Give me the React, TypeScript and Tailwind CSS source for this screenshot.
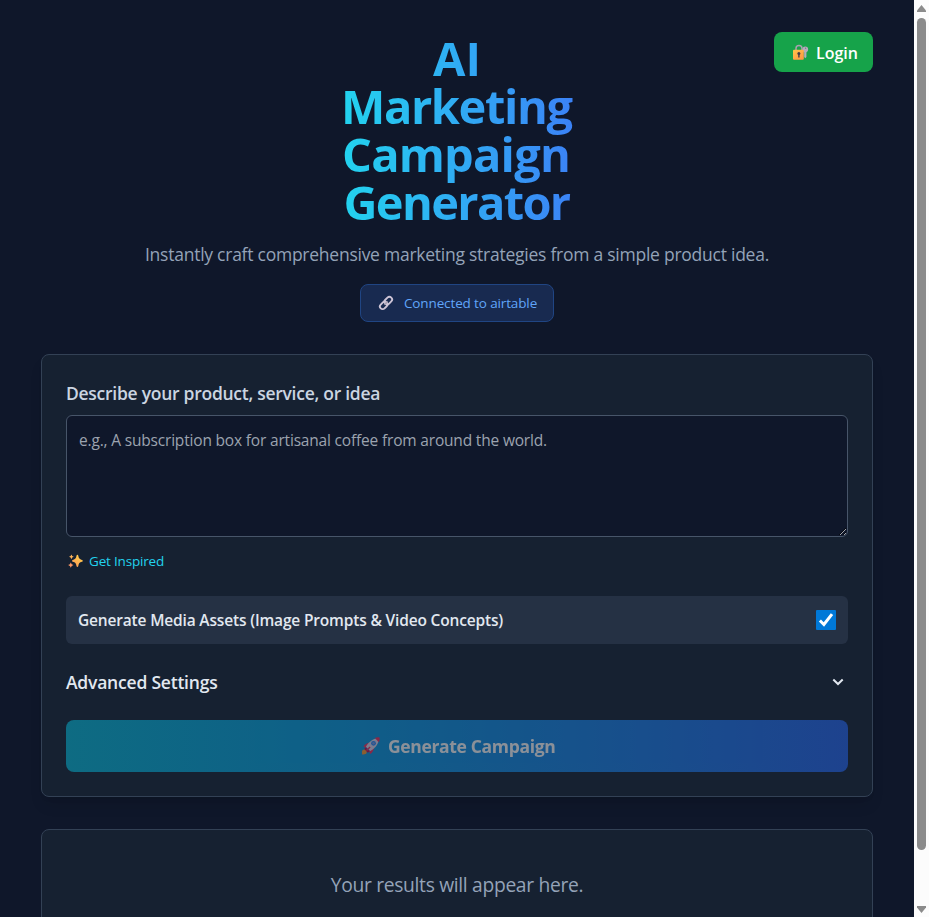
import React, { useState } from "react";

function LockIcon() {
  return (
    <svg width="17" height="17" viewBox="0 0 17 17" fill="none">
      <path d="M4 7V4.600a3 3 0 0 1 6 0V7" stroke="#a9a1b0" strokeWidth="1.500" />
      <circle cx="13.300" cy="5.400" r="2.800" fill="#b4acbc" />
      <circle cx="13.600" cy="4.200" r=".6" fill="#6f6878" />
      <path d="M12.200 7.500h2.200v5.400l-1.100 1.300-1.100-1.300z" fill="#b4acbc" />
      <rect x="1" y="5.800" width="10.800" height="10" rx="1" fill="url(#lockBody)" />
      <circle cx="6.900" cy="9.600" r="1.500" fill="#433b46" />
      <path d="M6.200 10.200h1.400v3.200H6.200z" fill="#433b46" />
      <defs>
        <linearGradient id="lockBody" x1="3" y1="6" x2="10" y2="16" gradientUnits="userSpaceOnUse">
          <stop stopColor="#ffc14a" />
          <stop offset="1" stopColor="#ff9442" />
        </linearGradient>
      </defs>
    </svg>
  );
}

function LinkIcon() {
  return (
    <svg width="16" height="16" viewBox="0 0 16 16" fill="none" stroke="#cdc4d6" strokeWidth="1.9">
      <rect x="6.1" y="2.9" width="8.4" height="5.4" rx="2.7" transform="rotate(-45 10.3 5.6)" />
      <rect x="1.5" y="7.7" width="8.4" height="5.4" rx="2.7" transform="rotate(-45 5.7 10.4)" />
      <path d="m6.5 9.6 3.1-3.1" stroke="#a79fb0" strokeWidth="1.3" />
    </svg>
  );
}

function SparklesIcon() {
  return (
    <svg width="15" height="14" viewBox="0 0 15 14">
      <defs>
        <linearGradient id="spark" x1="12" y1="1" x2="3" y2="13" gradientUnits="userSpaceOnUse">
          <stop stopColor="#ffd04a" />
          <stop offset="1" stopColor="#ff9257" />
        </linearGradient>
      </defs>
      <path fill="url(#spark)" d="M9.400.8c.5 0 .7.4.9 1 .5 2.700 1.200 3.500 3.600 4.100.6.1.9.5.9 1s-.3.800-.9.900c-2.400.6-3.100 1.400-3.600 4.100-.2.6-.4 1-.9 1s-.7-.4-.9-1C8 9.200 7.300 8.400 4.900 7.800 4.300 7.700 4 7.400 4 6.900s.3-.9.900-1C7.300 5.300 8 4.500 8.500 1.800c.2-.6.4-1 .9-1Z" />
      <path fill="#ffb45a" d="m3.400.4.8 1.600 1.600.8-1.600.8-.8 1.600-.8-1.600L1 2.800 2.600 2z" />
      <path fill="#ff9a68" d="m2.800 8.400.9 1.800 1.800.9-1.800.9-.9 1.800-.9-1.800-1.800-.9 1.800-.9z" />
    </svg>
  );
}

function RocketIcon() {
  return (
    <svg width="20" height="20" viewBox="0 0 20 20">
      <path fill="#f92f60" d="M2.500 10.800c1-2.500 3.400-3.800 6.500-4L5.900 11.900zM9.100 18c2.400-1.200 3.700-3.700 3.900-6.800L8 14.100z" />
      <path fill="#ff9b2f" d="M1.300 14.400c1.200-1.200 3.400-.9 4 0 .7.800.6 2.600-.4 3.400-1 .7-2.600.8-3.800.6 0-1.400-.3-3.200.2-4Z" />
      <path fill="#ca0b4a" d="m4.700 11.500 3.800 3.800-1.600 1.500-3.600-3.700z" />
      <path fill="#e1d8ec" d="M17.800 2.200c.300 4.400-2.600 9.500-8.500 12.900l-4.400-4.400C8.200 4.900 13.300 1.900 17.800 2.200Z" />
      <path fill="#f92f60" d="M18.500 1.500c.4 1.700.1 3.300-.6 4.700L13.800 2.100c1.400-.7 3-.9 4.700-.6Z" />
      <circle cx="12.500" cy="7.300" r="2.400" fill="#2689fc" />
      <circle cx="12.500" cy="7.300" r="1.200" fill="#7f9be0" />
      <path fill="#f92f60" d="m8.600 10.500 1 1-3.600 3.600-1-1z" />
    </svg>
  );
}

function Scrollbar() {
  return (
    <div className="flex h-full w-[15px] shrink-0 flex-col items-center bg-[#fcfcfc] pt-[5px] pb-1">
      <svg width="9" height="7" viewBox="0 0 9 7" fill="#8b8b8b">
        <path d="M4.500 0 9 5.500V7H0V5.500z" />
      </svg>
      <div className="mt-1.5 h-[832px] w-[9px] rounded-full bg-[#8b8b8b]" />
      <svg className="mt-auto" width="9" height="7" viewBox="0 0 9 7" fill="#8b8b8b">
        <path d="M0 0h9v1.500L4.500 7 0 1.500z" />
      </svg>
    </div>
  );
}

export default function App() {
  const [idea, setIdea] = useState("");
  const [media, setMedia] = useState(true);

  return (
    <div className="flex h-[917px] w-full overflow-hidden bg-[#0f172a] font-['Open_Sans','Noto_Sans',sans-serif] text-slate-200">
      <main className="relative h-full min-w-0 flex-1 overflow-hidden px-[41px] pt-8">
        <button className="absolute top-8 right-[41px] flex h-10 w-[99px] items-center rounded-lg bg-[#16a34a] pl-[18px] font-semibold text-white">
          <LockIcon />
          <span className="ml-[7px] pt-px text-[16px] leading-6">Login</span>
        </button>

        <header className="flex flex-col items-center">
          <h1 className="w-[232px] bg-linear-to-r from-[#22d3ee] to-[#3b82f6] bg-clip-text pt-0.5 text-center text-[47px] leading-[48px] font-bold text-transparent">
            <span className="block">AI</span>
            <span className="block pr-0.5 tracking-[-1.4px]">Marketing</span>
            <span className="block pr-0.5 tracking-[-0.8px]">Campaign</span>
            <span className="-mb-0.5 block pr-px tracking-[-1.66px]">Generator</span>
          </h1>
          <p className="mt-4 text-[17.5px] leading-7 tracking-[-0.25px] text-[#94a3b8]">
            Instantly craft comprehensive marketing strategies from a simple product idea.
          </p>
          <div className="mt-4 flex h-[38px] w-[194px] items-center rounded-lg border border-[#204583] bg-[#182a50] pl-[17px] text-[#60a5fa]">
            <LinkIcon />
            <span className="ml-2.5 text-[13.5px] leading-5 tracking-[-0.13px] whitespace-nowrap">Connected to airtable</span>
          </div>
        </header>

        <section className="mt-8 h-[443px] rounded-lg border border-[#334155] bg-[#162131] p-6 shadow-lg">
          <label htmlFor="idea" className="block text-[17.5px] leading-7 font-semibold tracking-[-0.27px] text-[#cbd5e1]">
            Describe your product, service, or idea
          </label>
          <textarea
            id="idea"
            value={idea}
            onChange={(e) => setIdea(e.target.value)}
            placeholder="e.g., A subscription box for artisanal coffee from around the world."
            className="mt-2 block h-[122px] w-full rounded-md border border-[#475569] bg-[#0f172a] p-3 text-[15.5px] leading-6 tracking-[-0.18px] placeholder:text-[#9ca3af]"
          />
          <button className="mt-3.5 flex h-5 items-center pl-0.5 text-[#22d3ee]">
            <SparklesIcon />
            <span className="ml-1.5 text-[13.5px] leading-5 tracking-[-0.18px]">Get Inspired</span>
          </button>
          <div className="mt-[25px] flex h-12 items-center justify-between rounded-md bg-[#253144] px-3">
            <span className="text-[15.5px] leading-6 font-semibold tracking-[-0.17px]">
              Generate Media Assets (Image Prompts &amp; Video Concepts)
            </span>
            <button
              role="checkbox"
              aria-checked={media}
              onClick={() => setMedia(!media)}
              className="size-5 rounded-[1px] bg-[#0078d7]"
            >
              {media && (
                <svg width="20" height="20" viewBox="0 0 20 20" fill="none" stroke="#fff" strokeWidth="3">
                  <path d="m3.900 10.500 4 4L16 4.100" />
                </svg>
              )}
            </button>
          </div>
          <div className="mt-6 flex h-7 items-center justify-between pr-1">
            <h2 className="text-[17.5px] leading-7 font-semibold tracking-[-0.21px]">Advanced Settings</h2>
            <svg width="12" height="8" viewBox="0 0 12 8" fill="none" stroke="#e2e8f0" strokeWidth="2">
              <path d="m1.300 1.500 4.700 4.500 4.700-4.500" />
            </svg>
          </div>
          <button
            disabled
            className="mt-6 flex h-[52px] w-full items-center rounded-lg bg-linear-to-r from-[#06b6d4] to-[#2563eb] pl-[295px] font-bold text-white opacity-50"
          >
            <RocketIcon />
            <span className="ml-[7px] text-[17.5px] leading-7 tracking-[-0.34px]">Generate Campaign</span>
          </button>
        </section>

        <section className="mt-8 h-[200px] rounded-lg border border-[#334155] bg-[#162131] pt-[41px] text-center">
          <p className="text-[19.25px] leading-7 tracking-[-0.32px] text-[#94a3b8]">Your results will appear here.</p>
        </section>
      </main>
      <Scrollbar />
    </div>
  );
}
